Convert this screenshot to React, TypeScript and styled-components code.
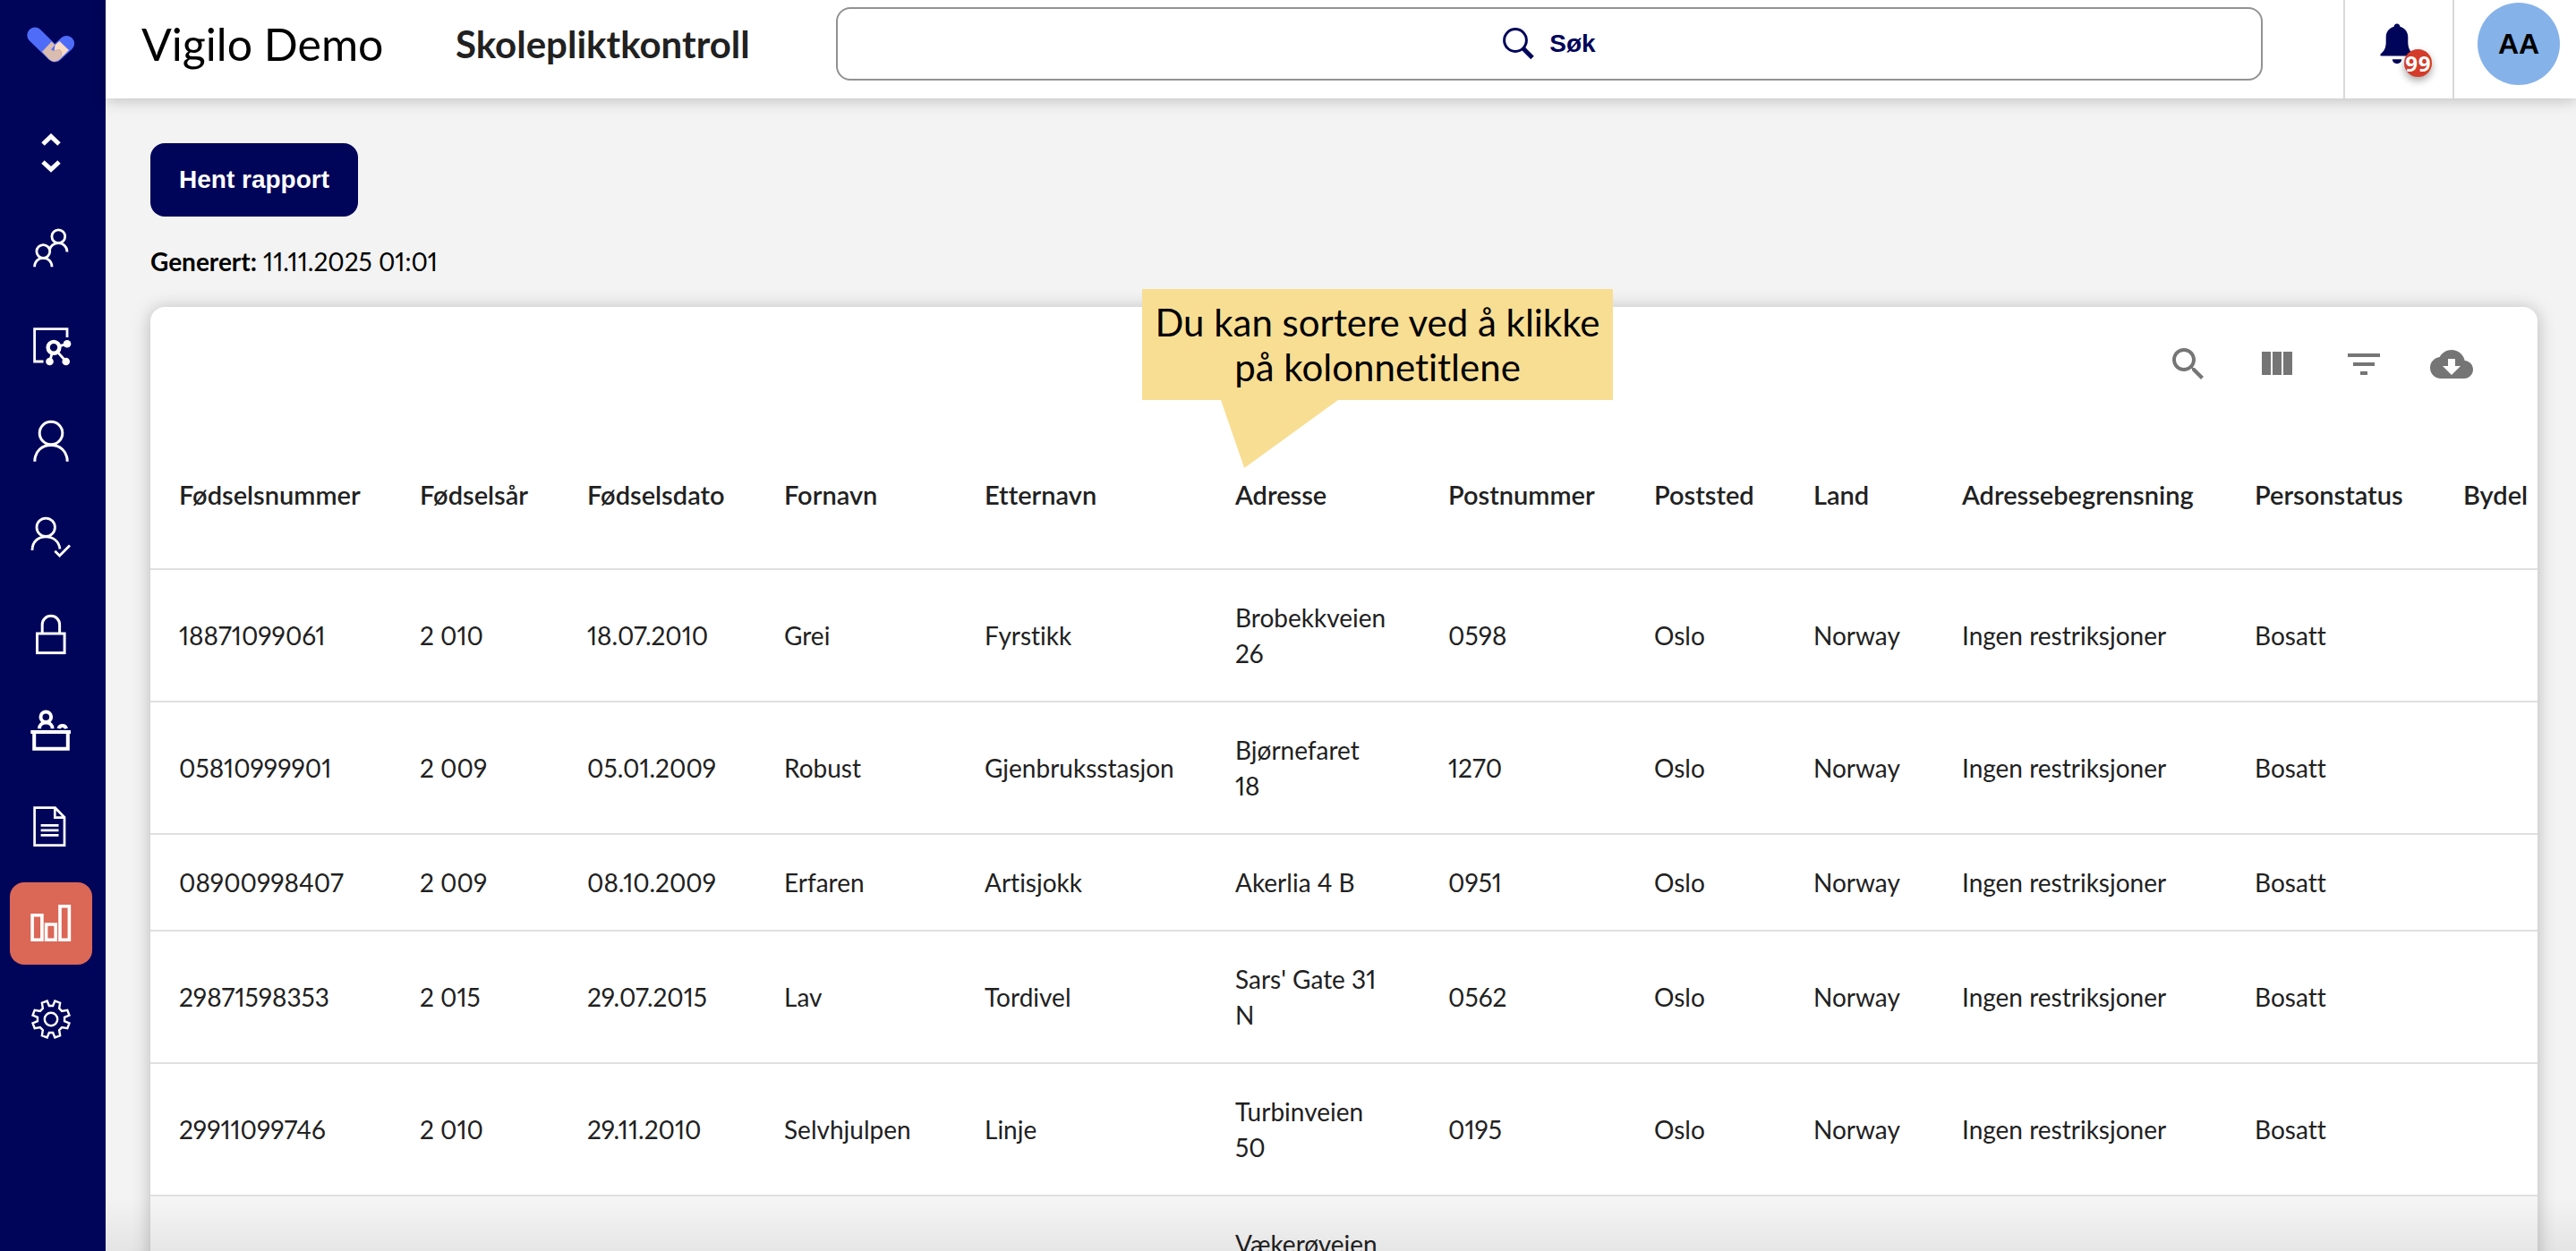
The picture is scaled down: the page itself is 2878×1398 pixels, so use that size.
import React from "react";
import styled, { createGlobalStyle } from "styled-components";

const navy = "#00055a";
const uiFont = `Lato, "Noto Sans", sans-serif`;
const controlFont = `"Liberation Sans", Arial, sans-serif`;

const GlobalStyle = createGlobalStyle`
  *, *::before, *::after { box-sizing: border-box; }
  body {
    margin: 0;
    background: #f3f3f3;
    color: #000;
    font-family: ${uiFont};
    font-size: 28px;
    line-height: 40px;
    font-variant-numeric: proportional-nums;
    font-variant-ligatures: no-common-ligatures;
  }
  button { font: inherit; color: inherit; border: 0; background: none; padding: 0; cursor: pointer; }
  svg { display: block; flex: none; }
`;

const Shell = styled.div`
  display: flex;
  height: 100vh;
  overflow: hidden;
`;

const Sidebar = styled.nav`
  flex: none;
  width: 118px;
  padding: 20px 4px 0 0;
  background: ${navy};
  display: flex;
  flex-direction: column;
  align-items: center;
`;

const LogoLink = styled.a`
  display: block;
  margin-bottom: 42px;
`;

const NavList = styled.ul`
  list-style: none;
  margin: 0;
  padding: 0;
  display: flex;
  flex-direction: column;
  gap: 16px;
`;

const NavButton = styled.button<{ $active?: boolean }>`
  display: block;
  width: 92px;
  height: 92px;
  border-radius: 16px;
  color: #fff;
  background: ${(p) => (p.$active ? "#db6756" : "transparent")};
`;

const Page = styled.div`
  flex: 1;
  min-width: 0;
  display: flex;
  flex-direction: column;
`;

const Header = styled.header`
  position: relative;
  flex: none;
  height: 110px;
  padding-left: 40px;
  background: #fff;
  box-shadow: 0 2px 16px rgba(0, 0, 0, 0.22);
  display: flex;
`;

const HeaderMain = styled.div`
  flex: 1;
  min-width: 0;
  display: flex;
  align-items: center;
  padding: 0 90px 12px 0;
`;

const Brand = styled.div`
  flex: none;
  width: 351px;
  font-size: 50px;
  line-height: 64px;
  white-space: nowrap;
`;

const PageTitle = styled.h1`
  flex: none;
  width: 425px;
  margin: 0;
  color: #212121;
  font-size: 42px;
  line-height: 56px;
  font-weight: 700;
  white-space: nowrap;
`;

const SearchButton = styled.button`
  flex: 1;
  height: 82px;
  border: 2px solid #929292;
  border-radius: 16px;
  color: ${navy};
  font-family: ${controlFont};
  font-weight: 700;
  display: flex;
  align-items: center;
  justify-content: center;
  gap: 16px;
`;

const HeaderCell = styled.div`
  flex: none;
  border-left: 2px solid #d9d9d9;
  padding-bottom: 12px;
  display: flex;
  align-items: center;
  justify-content: center;
`;

const BellCell = styled(HeaderCell)`
  width: 122px;
  padding-right: 4px;
`;

const AvatarCell = styled(HeaderCell)`
  width: 138px;
  padding-left: 8px;
`;

const BellButton = styled.button`
  position: relative;
`;

const Badge = styled.span`
  position: absolute;
  right: -20px;
  bottom: -14px;
  width: 31px;
  height: 31px;
  border-radius: 50%;
  background: #d43b2a;
  color: #fff;
  font-family: "Noto Sans", sans-serif;
  font-size: 24px;
  line-height: 31px;
  font-weight: 700;
  display: flex;
  justify-content: center;
  box-shadow: 0 4px 8px rgba(0, 0, 0, 0.35);
`;

const Avatar = styled.button`
  width: 92px;
  height: 92px;
  border-radius: 50%;
  background: #86b2ea;
  color: #000;
  font-family: ${controlFont};
  font-size: 32px;
  font-weight: 700;
`;

const Main = styled.main`
  flex: 1;
  min-height: 0;
  padding: 50px 43px 0 50px;
`;

const PrimaryButton = styled.button`
  display: block;
  height: 82px;
  padding: 0 32px;
  border-radius: 16px;
  background: ${navy};
  color: #fff;
  font-family: ${controlFont};
  font-weight: 700;
`;

const Generated = styled.p`
  margin: 30px 0 31px;
`;

const Card = styled.section`
  position: relative;
  background: #fff;
  border-radius: 16px;
  box-shadow: 0 2px 20px rgba(0, 0, 0, 0.25);
  color: #212121;
`;

const Toolbar = styled.div`
  height: 128px;
  padding-right: 48px;
  display: flex;
  align-items: center;
  justify-content: flex-end;
  gap: 2px;
`;

const ToolButton = styled.button`
  padding: 24px;
  color: #757575;
`;

const TableScroll = styled.div`
  overflow: hidden;
`;

const Table = styled.table`
  width: 2840px;
  table-layout: fixed;
  border-collapse: separate;
  border-spacing: 0;
`;

const HeadCell = styled.th`
  height: 166px;
  padding: 0 32px;
  border-bottom: 2px solid #e0e0e0;
  text-align: left;
  vertical-align: middle;
`;

const SortButton = styled.button`
  font-size: 29px;
  font-weight: 600;
  white-space: nowrap;
`;

const Row = styled.tr<{ $hovered?: boolean }>`
  background: ${(p) => (p.$hovered ? "#f5f5f5" : "#fff")};
`;

const Cell = styled.td<{ $wrap?: boolean }>`
  padding: 33px ${(p) => (p.$wrap ? "36px" : "32px")} 33px 32px;
  border-bottom: 2px solid #e0e0e0;
  vertical-align: middle;
  white-space: ${(p) => (p.$wrap ? "normal" : "nowrap")};
`;

const Callout = styled.div`
  position: absolute;
  top: -20px;
  left: 1108px;
  width: 526px;
  padding: 12px 0;
  background: #f8de93;
  color: #000;
  font-size: 42px;
  line-height: 50px;
  text-align: center;
  white-space: nowrap;

  &::after {
    content: "";
    position: absolute;
    top: 100%;
    left: 88px;
    width: 131px;
    height: 76px;
    background: inherit;
    clip-path: polygon(0 0, 100% 0, 20% 100%);
  }
`;

const BottomShade = styled.div`
  position: fixed;
  left: 118px;
  right: 0;
  bottom: 0;
  height: 60px;
  background: linear-gradient(rgba(0, 0, 0, 0), rgba(0, 0, 0, 0.06));
  pointer-events: none;
`;

function Logo() {
  return (
    <svg width="60" height="60" viewBox="27 20 60 60" fill="none">
      <path d="M39 39.3L60.8 60.6" stroke="#4f6cf8" strokeWidth="17.4" strokeLinecap="round" />
      <path d="M74.4 48.6L61.5 60.6" stroke="#4f6cf8" strokeWidth="17.4" strokeLinecap="round" />
      <path d="M61.5 50.3L66.5 46L77 56L68 65L60 61Z" fill="#f9dac5" />
      <path d="M57.6 46.6L61.3 50.2L57 55.5Q60 58.5 63 56Q68 54.5 69 58V64L67 66.3Q61 71.6 55 66.6L47 57.7Z" fill="#dbbcb0" />
      <path d="M57.5 55.8Q60 58 63 56Q68 55 68.7 58.5V62.5" stroke="#c9a9a0" strokeWidth="0.8" />
    </svg>
  );
}

function NavIcon({ stroke = 3, children }: { stroke?: number; children: React.ReactNode }) {
  return (
    <svg width="92" height="92" viewBox="0 0 92 92" fill="none" stroke="currentColor" strokeWidth={stroke}>
      {children}
    </svg>
  );
}

function gearPath(cx: number, cy: number) {
  const points: string[] = [];
  const add = (deg: number, r: number) => {
    const a = (deg * Math.PI) / 180;
    points.push(`${(cx + r * Math.sin(a)).toFixed(2)} ${(cy - r * Math.cos(a)).toFixed(2)}`);
  };
  for (let k = 0; k < 8; k++) {
    const mid = k * 45;
    const outer = k % 2 === 0 ? 12 : 16;
    add(mid - outer, 20.9);
    add(mid - 8, 15.2);
    add(mid + 8, 15.2);
    add(mid + outer, 20.9);
  }
  return `M${points.join("L")}Z`;
}

const navItems = [
  {
    label: "Bytt enhet",
    icon: (
      <NavIcon stroke={5}>
        <path d="M37 39L46 30.4L55 39M37 59L46 67.4L55 59" />
      </NavIcon>
    ),
  },
  {
    label: "Grupper",
    icon: (
      <NavIcon stroke={2.8}>
        <circle cx="54.3" cy="34.3" r="7.4" />
        <circle cx="37.3" cy="51" r="7.4" />
        <path d="M27.6 68.2C27.6 62 32 58.3 37.3 58.3S47 62 47 68.2M44.6 49C45 45 49 41.7 54.3 41.7C59.6 41.7 64 46 64 51.4" />
      </NavIcon>
    ),
  },
  {
    label: "Relasjoner",
    icon: (
      <NavIcon stroke={2.8}>
        <path d="M64 39V29.7H27.6V66H37.5M49 50.3L64 46.3M49 50.3L44.5 66M49 50.3L62.7 66" />
        <circle cx="49" cy="50.3" r="6.4" strokeWidth="4.4" fill={navy} />
        <g fill="currentColor" stroke="none">
          <circle cx="64" cy="46.3" r="4.3" />
          <circle cx="44.5" cy="66" r="4.3" />
          <circle cx="62.7" cy="66" r="4.3" />
        </g>
      </NavIcon>
    ),
  },
  {
    label: "Personer",
    icon: (
      <NavIcon>
        <circle cx="46" cy="38" r="12.8" />
        <path d="M27.8 69.8C27.8 58 36 51.6 46 51.6S64.2 58 64.2 69.8" />
      </NavIcon>
    ),
  },
  {
    label: "Godkjenning",
    icon: (
      <NavIcon stroke={2.8}>
        <circle cx="40.2" cy="35.3" r="10.2" />
        <path d="M25 61C25 51 32 45.8 40.2 45.8C48.5 45.8 55 51 56 59.5M50.3 61.8L55.6 67L67 55.5" />
      </NavIcon>
    ),
  },
  {
    label: "Tilgang",
    icon: (
      <NavIcon>
        <rect x="30.5" y="46" width="30.6" height="21.6" />
        <path d="M36.2 46V36A9.7 9.7 0 0 1 55.6 36V46" />
      </NavIcon>
    ),
  },
  {
    label: "Skranke",
    icon: (
      <NavIcon stroke={4}>
        <circle cx="40.3" cy="31.3" r="5.8" />
        <path d="M33 44.2C33 40.2 36 37.6 40.3 37.6S47.6 40.2 47.6 44.2M54.6 44.2C55.5 39.8 62 39.8 63 44.2M23.3 48H68M27.2 50V66.8H64.8V50" />
      </NavIcon>
    ),
  },
  {
    label: "Dokumenter",
    icon: (
      <NavIcon stroke={2.7}>
        <path d="M27.6 24.7H50.6L61 35.2V66.7H27.6ZM50.3 24.7V35.6H61M34.6 44.4H54.5M34.6 49.8H54.5M34.6 55.3H54.5" />
      </NavIcon>
    ),
  },
  {
    label: "Rapporter",
    active: true,
    icon: (
      <NavIcon stroke={3.6}>
        <path d="M25.1 36.8H35.9V64.2H25.1ZM40.6 47H51.2V64.2H40.6ZM56 26.8H66.4V64.2H56Z" />
      </NavIcon>
    ),
  },
  {
    label: "Innstillinger",
    icon: (
      <NavIcon stroke={2.4}>
        <circle cx="46" cy="45" r="7.2" />
        <path d={gearPath(46, 45)} />
      </NavIcon>
    ),
  },
];

const tools = [
  {
    label: "Søk i tabell",
    d: "M15.5 14h-.79l-.28-.27C15.41 12.59 16 11.11 16 9.5 16 5.91 13.09 3 9.5 3S3 5.91 3 9.5 5.91 16 9.5 16c1.61 0 3.09-.59 4.23-1.57l.27.28v.79l5 4.99L20.49 19l-4.99-5zm-6 0C7.01 14 5 11.99 5 9.5S7.01 5 9.5 5 14 7.01 14 9.5 11.99 14 9.5 14z",
  },
  { label: "Vis kolonner", d: "M10 18h5V5h-5v13zm-6 0h5V5H4v13zM16 5v13h5V5h-5z" },
  { label: "Filtrer", d: "M10 18h4v-2h-4v2zM3 6v2h18V6H3zm3 7h12v-2H6v2z" },
  {
    label: "Last ned",
    d: "M19.35 10.04C18.67 6.59 15.64 4 12 4 9.11 4 6.6 5.64 5.35 8.04 2.34 8.36 0 10.91 0 14c0 3.31 2.69 6 6 6h13c2.76 0 5-2.24 5-5 0-2.64-2.05-4.78-4.65-4.96zM17 13l-5 5-5-5h3V9h4v4h3z",
  },
];

const columns = [
  { title: "Fødselsnummer", width: 269 },
  { title: "Fødselsår", width: 187 },
  { title: "Fødselsdato", width: 220 },
  { title: "Fornavn", width: 224 },
  { title: "Etternavn", width: 280 },
  { title: "Adresse", width: 238 },
  { title: "Postnummer", width: 230 },
  { title: "Poststed", width: 178 },
  { title: "Land", width: 166 },
  { title: "Adressebegrensning", width: 327 },
  { title: "Personstatus", width: 233 },
  { title: "Bydel", width: 288 },
];

const addressColumn = 5;

const rows = [
  ["18871099061", "2 010", "18.07.2010", "Grei", "Fyrstikk", "Brobekkveien 26", "0598"],
  ["05810999901", "2 009", "05.01.2009", "Robust", "Gjenbruksstasjon", "Bjørnefaret 18", "1270"],
  ["08900998407", "2 009", "08.10.2009", "Erfaren", "Artisjokk", "Akerlia 4 B", "0951"],
  ["29871598353", "2 015", "29.07.2015", "Lav", "Tordivel", "Sars' Gate 31 N", "0562"],
  ["29911099746", "2 010", "29.11.2010", "Selvhjulpen", "Linje", "Turbinveien 50", "0195"],
].map((r) => [...r, "Oslo", "Norway", "Ingen restriksjoner", "Bosatt", ""]);

const hoveredRow = columns.map((_, i) => (i === addressColumn ? "Vækerøveien" : ""));

export default function App() {
  return (
    <>
      <GlobalStyle />
      <Shell>
        <Sidebar aria-label="Hovedmeny">
          <LogoLink href="#" aria-label="Vigilo">
            <Logo />
          </LogoLink>
          <NavList>
            {navItems.map((item) => (
              <li key={item.label}>
                <NavButton $active={item.active} aria-label={item.label}>
                  {item.icon}
                </NavButton>
              </li>
            ))}
          </NavList>
        </Sidebar>

        <Page>
          <Header>
            <HeaderMain>
              <Brand>Vigilo Demo</Brand>
              <PageTitle>Skolepliktkontroll</PageTitle>
              <SearchButton>
                <svg width="36" height="36" viewBox="0 0 36 36" fill="none" stroke="currentColor">
                  <circle cx="14" cy="14" r="12.4" strokeWidth="3" />
                  <path d="M22.6 23L33 33.4" strokeWidth="5" />
                </svg>
                Søk
              </SearchButton>
            </HeaderMain>
            <BellCell>
              <BellButton aria-label="Varsler">
                <svg width="38" height="46" viewBox="0 0 38 46" fill={navy}>
                  <path d="M19 0.5C21 0.5 22.3 1.9 22.4 3.8C28 5.3 31.3 10 31.3 15.5V21C31.3 27.5 33.5 31 36.5 33.6C38.3 35.2 37.8 36.6 36.3 36.6H1.7C0.2 36.6 -0.3 35.2 1.5 33.6C4.5 31 6.7 27.5 6.7 21V15.5C6.7 10 10 5.3 15.6 3.8C15.7 1.9 17 0.5 19 0.5Z" />
                  <path d="M13.8 40.2H24.2A5.2 5 0 0 1 13.8 40.2Z" />
                </svg>
                <Badge>99</Badge>
              </BellButton>
            </BellCell>
            <AvatarCell>
              <Avatar aria-label="Brukermeny">AA</Avatar>
            </AvatarCell>
          </Header>

          <Main>
            <PrimaryButton>Hent rapport</PrimaryButton>
            <Generated>
              <strong>Generert:</strong> 11.11.2025 01:01
            </Generated>
            <Card>
              <Toolbar>
                {tools.map((tool) => (
                  <ToolButton key={tool.label} aria-label={tool.label}>
                    <svg width="48" height="48" viewBox="0 0 24 24" fill="currentColor">
                      <path d={tool.d} />
                    </svg>
                  </ToolButton>
                ))}
              </Toolbar>
              <TableScroll>
                <Table>
                  <colgroup>
                    {columns.map((c) => (
                      <col key={c.title} style={{ width: c.width }} />
                    ))}
                  </colgroup>
                  <thead>
                    <tr>
                      {columns.map((c) => (
                        <HeadCell key={c.title} scope="col">
                          <SortButton>{c.title}</SortButton>
                        </HeadCell>
                      ))}
                    </tr>
                  </thead>
                  <tbody>
                    {[...rows, hoveredRow].map((row, r) => (
                      <Row key={r} $hovered={row === hoveredRow}>
                        {row.map((value, c) => (
                          <Cell key={c} $wrap={c === addressColumn}>
                            {value}
                          </Cell>
                        ))}
                      </Row>
                    ))}
                  </tbody>
                </Table>
              </TableScroll>
              <Callout role="note">
                Du kan sortere ved å klikke
                <br />
                på kolonnetitlene
              </Callout>
            </Card>
          </Main>
        </Page>
        <BottomShade />
      </Shell>
    </>
  );
}
